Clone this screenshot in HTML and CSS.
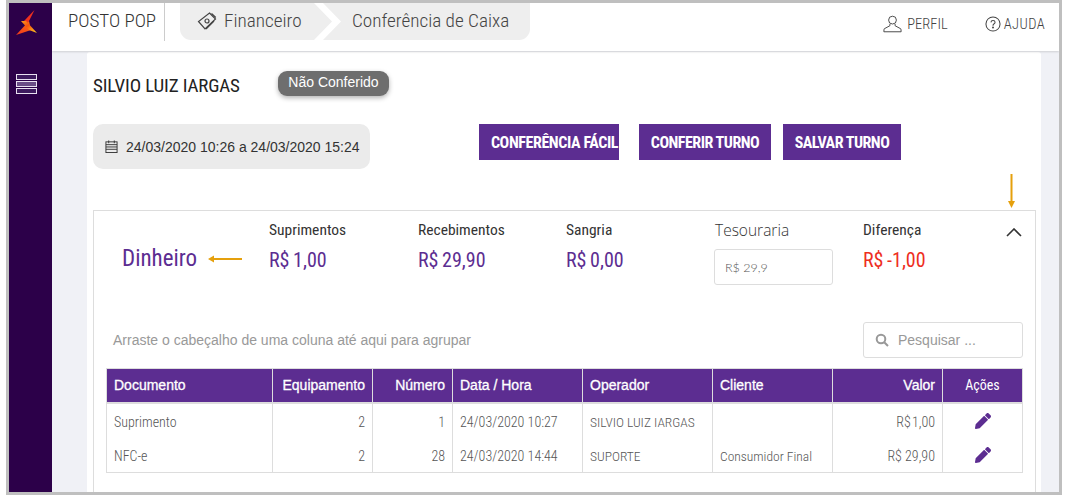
FILE: index.html
```html
<!DOCTYPE html>
<html lang="pt-BR">
<head>
<meta charset="utf-8">
<title>Conferência de Caixa</title>
<link rel="stylesheet" href="styles.css">
</head>
<body>
<div class="frame">
  <aside class="sidebar">
    <svg class="logo" viewBox="0 0 21 25" width="21" height="25">
      <defs>
        <linearGradient id="lg2" x1="0" y1="0" x2="1" y2="1"><stop offset="0" stop-color="#f9a01b"/><stop offset=".4" stop-color="#f4500f"/><stop offset="1" stop-color="#ffd21f"/></linearGradient>
        <linearGradient id="lg3" x1="0" y1="1" x2="1" y2="0"><stop offset="0" stop-color="#f2381c"/><stop offset="1" stop-color="#f76a12"/></linearGradient>
      </defs>
      <path d="M18.5 0 L8 11 L11.5 14 Z" fill="#f0301f"/>
      <path d="M13 11 L0 25 L15 20 Z" fill="url(#lg3)"/>
      <path d="M5 11 L10 11 L21 23 L13 20 Z" fill="url(#lg2)"/>
    </svg>
    <div class="menu"><span></span><span class="mid"></span><span></span></div>
  </aside>
  <div class="main">
    <header class="topbar">
      <div class="brand">POSTO POP</div>
      <nav class="crumbs">
        <span class="crumb crumb-first">
          <svg class="crumb-icon" viewBox="0 0 20 20" width="20" height="20" fill="none" stroke="#444" stroke-width="1.2">
            <path d="M12.5 2 L18.5 8 L8 18 L1.5 10.5 Z"/>
            <path d="M14.5 2.5 L18.8 6.5"/>
            <circle cx="10" cy="10" r="2"/>
            <path d="M17 10 L9 18"/>
          </svg>
          Financeiro
        </span>
        <span class="crumb crumb-last">Conferência de Caixa</span>
      </nav>
      <div class="top-actions">
        <a class="top-link perfil">
          <svg viewBox="0 0 22 20" width="19" height="18" fill="none" stroke="#444" stroke-width="1.1">
            <circle cx="11" cy="5.5" r="4.5"/>
            <path d="M8 10 L8 12 L1.5 15.5 Q1 16 1 19 L21 19 Q21 16 20.5 15.5 L14 12 L14 10"/>
          </svg>
          PERFIL
        </a>
        <a class="top-link ajuda">
          <svg viewBox="0 0 17 17" width="16" height="16" fill="none" stroke="#444" stroke-width="1.1">
            <circle cx="8.5" cy="8.5" r="7.5"/>
            <path d="M6.3 6.8 Q6.5 4.8 8.5 4.8 Q10.7 4.8 10.7 6.6 Q10.7 7.8 9.4 8.5 Q8.5 9 8.5 10.3"/>
            <circle cx="8.5" cy="12.3" r=".5"/>
          </svg>
          AJUDA
        </a>
      </div>
    </header>
    <div class="content">
      <section class="card">
        <div class="head-row">
          <h1 class="name">SILVIO LUIZ IARGAS</h1>
          <span class="status">Não Conferido</span>
        </div>
        <div class="tools-row">
          <div class="period">
            <svg viewBox="0 0 14 14" width="13" height="13" fill="none" stroke="#333" stroke-width="1">
              <rect x="1" y="2" width="12" height="11.5"/>
              <path d="M1 5h12M1 7.5h12M1 10h12M4 .5v3M10 .5v3" />
            </svg>
            <span>24/03/2020 10:26 a 24/03/2020 15:24</span>
          </div>
          <div class="buttons">
            <button class="btn btn-a">CONFERÊNCIA FÁCIL</button>
            <button class="btn btn-b">CONFERIR TURNO</button>
            <button class="btn btn-c">SALVAR TURNO</button>
          </div>
        </div>
        <div class="box">
          <svg class="arrow-down" viewBox="0 0 9 34" width="9" height="34">
            <path d="M4.5 0V28" stroke="#e5a00d" stroke-width="2"/>
            <path d="M1 27h7l-3.5 7z" fill="#e5a00d"/>
          </svg>
          <div class="summary">
            <div class="kind">
              <span class="kind-name">Dinheiro</span>
              <svg viewBox="0 0 34 8" width="34" height="8">
                <path d="M5 4H34" stroke="#e5a00d" stroke-width="2"/>
                <path d="M6 .5v7L0 4z" fill="#e5a00d"/>
              </svg>
            </div>
            <div class="stat stat-w1"><div class="stat-label">Suprimentos</div><div class="stat-value">R$ 1,00</div></div>
            <div class="stat stat-w2"><div class="stat-label">Recebimentos</div><div class="stat-value">R$ 29,90</div></div>
            <div class="stat stat-w1"><div class="stat-label">Sangria</div><div class="stat-value">R$ 0,00</div></div>
            <div class="stat stat-w2">
              <div class="stat-label treasury">Tesouraria</div>
              <div class="input">R$ 29,9</div>
            </div>
            <div class="stat stat-w3"><div class="stat-label">Diferença</div><div class="stat-value negative">R$ -1,00</div></div>
            <svg class="chevron" viewBox="0 0 16 9" width="16" height="9" fill="none" stroke="#333" stroke-width="1.6"><path d="M1 8l7-7 7 7"/></svg>
          </div>
          <div class="grid-bar">
            <span class="drag-hint">Arraste o cabeçalho de uma coluna até aqui para agrupar</span>
            <div class="search">
              <svg viewBox="0 0 14 14" width="14" height="14" fill="none" stroke="#999" stroke-width="2"><circle cx="6" cy="6" r="4.3"/><path d="M9.2 9.2L13 13"/></svg>
              <span>Pesquisar ...</span>
            </div>
          </div>
          <table class="grid">
            <colgroup>
              <col class="c1"><col class="c2"><col class="c3"><col class="c4"><col class="c5"><col class="c6"><col class="c7"><col class="c8">
            </colgroup>
            <thead>
              <tr>
                <th>Documento</th><th class="right">Equipamento</th><th class="right">Número</th><th>Data / Hora</th><th>Operador</th><th>Cliente</th><th class="right">Valor</th><th class="actions-head">Ações</th>
              </tr>
            </thead>
            <tbody>
              <tr>
                <td>Suprimento</td><td class="right">2</td><td class="right">1</td><td>24/03/2020 10:27</td><td class="narrow">SILVIO LUIZ IARGAS</td><td class="narrow"></td><td class="right money">R$ 1,00</td>
                <td class="act"><svg viewBox="0 0 512 512" width="16" height="16"><path fill="#5c2d91" d="M497.9 142.1l-46.1 46.1c-4.7 4.7-12.3 4.7-17 0l-111-111c-4.7-4.7-4.7-12.3 0-17l46.1-46.1c18.7-18.7 49.1-18.7 67.9 0l60.1 60.1c18.8 18.7 18.8 49.1 0 67.9zM284.2 99.8L21.6 362.4.4 483.9c-2.9 16.4 11.4 30.6 27.8 27.8l121.5-21.3 262.6-262.6c4.7-4.7 4.7-12.3 0-17l-111-111c-4.8-4.7-12.4-4.7-17.1 0z"/></svg></td>
              </tr>
              <tr>
                <td>NFC-e</td><td class="right">2</td><td class="right">28</td><td>24/03/2020 14:44</td><td class="narrow">SUPORTE</td><td class="narrow">Consumidor Final</td><td class="right">R$ 29,90</td>
                <td class="act"><svg viewBox="0 0 512 512" width="16" height="16"><path fill="#5c2d91" d="M497.9 142.1l-46.1 46.1c-4.7 4.7-12.3 4.7-17 0l-111-111c-4.7-4.7-4.7-12.3 0-17l46.1-46.1c18.7-18.7 49.1-18.7 67.9 0l60.1 60.1c18.8 18.7 18.8 49.1 0 67.9zM284.2 99.8L21.6 362.4.4 483.9c-2.9 16.4 11.4 30.6 27.8 27.8l121.5-21.3 262.6-262.6c4.7-4.7 4.7-12.3 0-17l-111-111c-4.8-4.7-12.4-4.7-17.1 0z"/></svg></td>
              </tr>
            </tbody>
          </table>
        </div>
      </section>
    </div>
  </div>
</div>
</body>
</html>
```
FILE: styles.css
```css
* { box-sizing: border-box; }
html, body { margin: 0; padding: 0; background: #fff; overflow: hidden; }
body { width: 1070px; height: 497px; font-family: "Roboto Condensed", Roboto, sans-serif; font-stretch: 75%; font-weight: 300; color: #333; }

.frame { display: flex; width: 1056px; height: 495px; margin-left: 6px; border: 3px solid #bfbfbf; overflow: hidden; }

.sidebar { flex: 0 0 43px; background: #2c0049; display: flex; flex-direction: column; align-items: flex-start; }
.logo { margin: 7px 0 0 7px; }
.menu { margin: 39px 0 0 7px; width: 21px; display: flex; flex-direction: column; gap: 1px; }
.menu span { display: block; height: 6px; border: 1.5px solid #e8e0f0; background: #3d1a5e; }
.menu .mid { background: #6a4d86; }

.main { flex: 1; display: flex; flex-direction: column; min-width: 0; }

.topbar { flex: 0 0 48px; display: flex; align-items: flex-start; background: #fff; box-shadow: 0 1px 2px rgba(0,0,0,.14); position: relative; z-index: 1; }
.brand { width: 97px; height: 38px; margin-left: 16px; padding-top: 6px; font-size: 19px; border-right: 1px solid #ccc; color: #333; white-space: nowrap; }
.crumbs { display: flex; flex: none; width: 350px; height: 37px; margin-left: 15px; background: #eee; border-radius: 0 0 11px 11px; font-size: 19.2px; color: #444; }
.crumb { display: flex; align-items: center; height: 37px; padding-bottom: 2px; white-space: nowrap; }
.crumb-first { flex: none; width: 148px; padding-left: 17px; gap: 7px; position: relative; }
.crumb-first::after { content: ""; position: absolute; left: 134px; top: 0; width: 28px; height: 37px; background: #fff; clip-path: polygon(0 0, 9px 0, 27px 50%, 9px 100%, 0 100%, 18px 50%); }
.crumb-icon { flex: none; }
.crumb-last { padding-left: 24px; }

.top-actions { margin-left: auto; display: flex; margin-right: 14px; margin-top: 11px; gap: 37px; font-size: 14.5px; color: #444; }
.top-link { display: flex; align-items: center; height: 20px; white-space: nowrap; }
.perfil { gap: 5px; }
.ajuda { gap: 3px; letter-spacing: .4px; }

.content { flex: 1; background: #f0f1f6; padding: 1px 18px 0 35px; min-height: 0; }
.card { height: 100%; background: #fff; padding: 19px 5px 0 6px; border-radius: 3px 3px 0 0; overflow: hidden; }

.head-row { display: flex; align-items: center; height: 25px; }
.name { margin: 3px 0 0; width: 185px; font-size: 19px; font-weight: 400; letter-spacing: -.15px; color: #222; white-space: nowrap; }
.status { display: inline-flex; align-items: center; justify-content: center; width: 111px; height: 25px; padding-bottom: 3px; background: #6e6e6e; color: #fff; border-radius: 9px; font: 14px "Liberation Sans", sans-serif; box-shadow: 0 2px 5px rgba(0,0,0,.3); }

.tools-row { display: flex; margin-top: 28px; height: 45px; }
.period { display: flex; align-items: center; gap: 8px; width: 277px; height: 45px; padding-left: 12px; background: #ebebeb; border-radius: 10px; font: 14px "Liberation Sans", sans-serif; color: #333; }
.buttons { display: flex; margin-left: 109px; gap: 12px; }
.btn { height: 36px; border: 0; padding: 0; background: #5c2d91; color: #fff; font: 700 16px "Roboto Condensed", Roboto, sans-serif; font-stretch: 75%; letter-spacing: -.5px; white-space: nowrap; }
.btn-a { width: 140px; margin-right: 8px; padding-left: 11px; letter-spacing: -.4px; }
.btn-b { width: 132px; }
.btn-c { width: 118px; }

.box { margin-top: 41px; height: 300px; border: 1px solid #ddd; padding: 0 12px; position: relative; }
.arrow-down { position: absolute; right: 19px; top: -37px; }

.summary { display: flex; height: 111px; margin-left: -12px; padding-top: 8px; }
.kind { width: 175px; padding: 26px 0 0 28px; display: flex; align-items: flex-start; gap: 11px; }
.kind-name { font-size: 23px; font-weight: 400; color: #5c2d91; line-height: 28px; }
.kind svg { margin-top: 10px; }
.stat-w1 { width: 149px; }
.stat-w2 { width: 148px; }
.stat-w3 { width: 143px; }
.stat-label { font-size: 15.5px; font-weight: 400; color: #333; line-height: 22px; }
.stat-label.treasury { font: 300 15.5px "Open Sans", sans-serif; color: #333; }
.stat-value { margin-top: 7px; font-size: 20px; font-weight: 400; line-height: 24px; word-spacing: -1px; color: #5c2d91; }
.stat-value.negative { color: #ee2e1e; }
.input { width: 119px; height: 36px; margin: 8px 0 0 -1px; padding: 0 10px; display: flex; align-items: center; border: 1px solid #ddd; border-radius: 3px; font: 300 12.5px "Lato", sans-serif; color: #555; }
.chevron { margin-top: 9px; }

.grid-bar { display: flex; justify-content: space-between; align-items: center; height: 36px; }
.drag-hint { margin-left: 7px; font: 14px "Liberation Sans", sans-serif; color: #999; }
.search { display: flex; align-items: center; gap: 9px; width: 160px; height: 36px; padding-left: 11px; border: 1px solid #ddd; border-radius: 3px; font: 14px "Liberation Sans", sans-serif; color: #999; }

.grid { margin-top: 10px; width: 916px; table-layout: fixed; border-collapse: collapse; }
.c1 { width: 166px; } .c2 { width: 100px; } .c3 { width: 80px; } .c4 { width: 130px; }
.c5 { width: 130px; } .c6 { width: 120px; } .c7 { width: 110px; } .c8 { width: 80px; }
.grid th { height: 34px; padding: 0 7px; background: #5c2d91; color: #fff; font: 400 14px "Liberation Sans", sans-serif; -webkit-text-stroke: .3px #fff; text-align: left; border: 1px solid #ddd; border-bottom-width: 2px; white-space: nowrap; }
.grid th.actions-head { text-align: center; font: 400 14px "Roboto Condensed", Roboto, sans-serif; -webkit-text-stroke: 0; }
.grid td { height: 35px; padding: 2px 7px 0; border-left: 1px solid #ddd; border-right: 1px solid #ddd; font-size: 14px; color: #555; white-space: nowrap; }
.grid td.narrow { font-size: 13.5px; }
.grid td.money { word-spacing: -2px; }
.grid tbody tr:last-child td { border-bottom: 1px solid #ddd; }
.grid .right { text-align: right; }
.grid .act { text-align: center; padding-top: 4px; }
```
